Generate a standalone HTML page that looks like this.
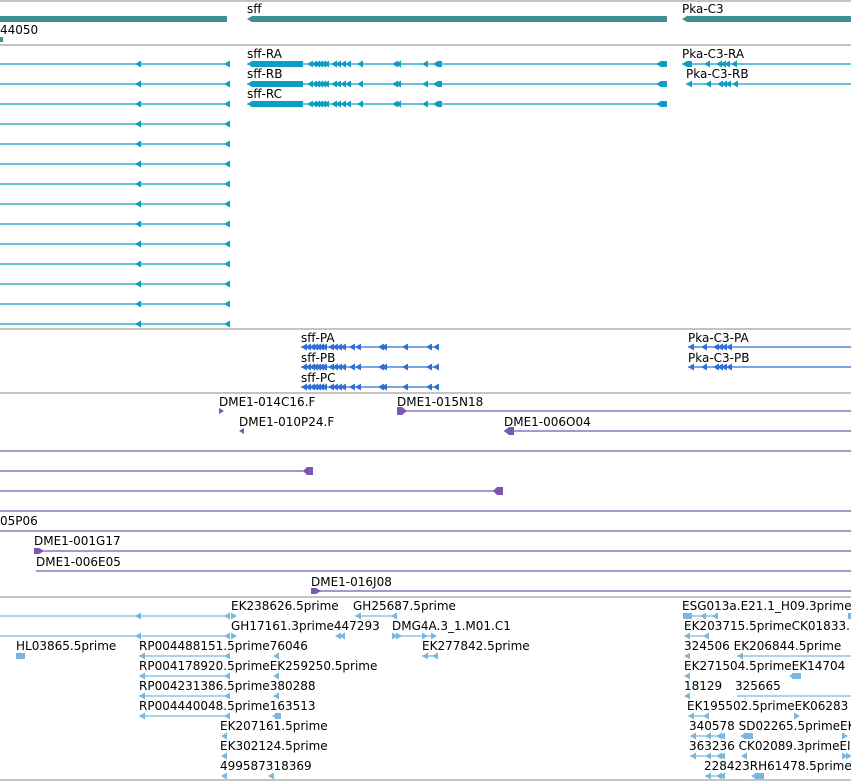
<!DOCTYPE html>
<html><head><meta charset="utf-8"><style>
html,body{margin:0;padding:0;background:#fff;}
svg{display:block;}
text{font-family:"DejaVu Sans","Liberation Sans",sans-serif;font-size:12px;fill:#000;}
.g{stroke:#c4c4c4;stroke-width:2;}
.t{stroke:#0d9ec4;stroke-width:1.3;fill:none;}
.tf{fill:#0d9ec4;}
.b{stroke:#2f6fd6;stroke-width:1.3;}
.bf{fill:#2f6fd6;}
.p{stroke:#7b57b3;stroke-width:1.3;}
.pf{fill:#7b57b3;}
.l{stroke:#7ab7e0;stroke-width:1.3;}
.lf{fill:#7ab7e0;}
</style></head><body>
<svg width="851" height="781" viewBox="0 0 851 781" xmlns="http://www.w3.org/2000/svg">
<defs>
<polygon id="al" points="0,0 6,-3.5 6,3.5"/>
<polygon id="ar" points="6,0 0,-3.5 0,3.5"/>
</defs>
<line class="g" x1="0" y1="1" x2="851" y2="1"/>
<line class="g" x1="0" y1="45" x2="851" y2="45"/>
<line class="g" x1="0" y1="329" x2="851" y2="329"/>
<line class="g" x1="0" y1="393" x2="851" y2="393"/>
<line class="g" x1="0" y1="597" x2="851" y2="597"/>
<line class="g" x1="0" y1="780" x2="851" y2="780"/>

<rect x="0" y="16" width="227" height="6" fill="#3f8f93"/>
<polygon points="247,19 252,16 667,16 667,22 252,22" fill="#3f8f93"/>
<polygon points="682,19 687,16 851,16 851,22 687,22" fill="#3f8f93"/>
<text x="247" y="13">sff</text>
<text x="682" y="13">Pka-C3</text>
<text x="0" y="34">44050</text>
<rect x="0" y="37" width="3" height="5" fill="#3f8f93"/>

<g class="tf">
<g id="lr">
<line class="t" x1="0" y1="64" x2="229" y2="64"/>
<use href="#al" x="135" y="64"/><polygon points="224,64 230,60.5 230,67.5"/>
</g>
<use href="#lr" y="20"/><use href="#lr" y="40"/><use href="#lr" y="60"/><use href="#lr" y="80"/>
<use href="#lr" y="100"/><use href="#lr" y="120"/><use href="#lr" y="140"/><use href="#lr" y="160"/>
<use href="#lr" y="180"/><use href="#lr" y="200"/><use href="#lr" y="220"/><use href="#lr" y="240"/><use href="#lr" y="260"/>
</g>
<g class="tf">
<g id="sr">
<line class="t" x1="247" y1="64" x2="667" y2="64"/>
<polygon points="247,64 252,61 303,61 303,67 252,67"/>
<use href="#al" x="307" y="64"/><use href="#al" x="311" y="64"/><use href="#al" x="314" y="64"/><use href="#al" x="317" y="64"/><use href="#al" x="320" y="64"/><use href="#al" x="323" y="64"/>
<use href="#al" x="331" y="64"/><use href="#al" x="335" y="64"/><use href="#al" x="340" y="64"/><use href="#al" x="345" y="64"/>
<use href="#al" x="357" y="64"/><use href="#al" x="392" y="64"/><use href="#al" x="395" y="64"/>
<use href="#al" x="422" y="64"/><use href="#al" x="433" y="64"/><polygon points="433,64 438,61 442,61 442,67 438,67"/>
<polygon points="656,64 661,61 667,61 667,67 661,67"/>
</g>
<use href="#sr" y="20"/><use href="#sr" y="40"/>
</g>
<text x="247" y="58">sff-RA</text>
<text x="247" y="78">sff-RB</text>
<text x="247" y="98">sff-RC</text>
<g class="tf">
<line class="t" x1="682" y1="64" x2="851" y2="64"/>
<polygon points="682,64 687,61 692,61 692,67 687,67"/>
<use href="#al" x="704" y="64"/><use href="#al" x="716" y="64"/><use href="#al" x="720" y="64"/><use href="#al" x="724" y="64"/><use href="#al" x="731" y="64"/>
<line class="t" x1="686" y1="84" x2="851" y2="84"/>
<use href="#al" x="686" y="84"/><use href="#al" x="705" y="84"/><use href="#al" x="717" y="84"/><use href="#al" x="721" y="84"/><use href="#al" x="725" y="84"/><use href="#al" x="732" y="84"/>
</g>
<text x="682" y="58">Pka-C3-RA</text>
<text x="686" y="78">Pka-C3-RB</text>

<g class="bf">
<g id="pr">
<line class="b" x1="301" y1="347" x2="437" y2="347"/>
<use href="#al" x="301" y="347"/><use href="#al" x="305" y="347"/><use href="#al" x="309" y="347"/><use href="#al" x="312" y="347"/><use href="#al" x="315" y="347"/><use href="#al" x="318" y="347"/><use href="#al" x="321" y="347"/>
<use href="#al" x="328" y="347"/><use href="#al" x="332" y="347"/><use href="#al" x="336" y="347"/><use href="#al" x="340" y="347"/>
<use href="#al" x="349" y="347"/><use href="#al" x="355" y="347"/><use href="#al" x="378" y="347"/><use href="#al" x="381" y="347"/><use href="#al" x="402" y="347"/><use href="#al" x="426" y="347"/><use href="#al" x="433" y="347"/>
</g>
<use href="#pr" y="20"/><use href="#pr" y="40"/>
<line class="b" x1="688" y1="347" x2="851" y2="347"/>
<use href="#al" x="688" y="347"/><use href="#al" x="701" y="347"/><use href="#al" x="713" y="347"/><use href="#al" x="717" y="347"/><use href="#al" x="721" y="347"/><use href="#al" x="726" y="347"/>
<line class="b" x1="688" y1="367" x2="851" y2="367"/>
<use href="#al" x="688" y="367"/><use href="#al" x="701" y="367"/><use href="#al" x="713" y="367"/><use href="#al" x="717" y="367"/><use href="#al" x="721" y="367"/><use href="#al" x="726" y="367"/>
</g>
<text x="301" y="342">sff-PA</text>
<text x="301" y="362">sff-PB</text>
<text x="301" y="382">sff-PC</text>
<text x="688" y="342">Pka-C3-PA</text>
<text x="688" y="362">Pka-C3-PB</text>

<g class="pf">
<polygon points="219,408 224,411 219,414"/>
<line class="p" x1="397" y1="411" x2="851" y2="411"/><polygon points="397,407 402,407 407,411 402,415 397,415"/>
<polygon points="239,431 244,428 244,434"/>
<line class="p" x1="504" y1="431" x2="851" y2="431"/><polygon points="504,431 509,427 514,427 514,435 509,435"/>
<line class="p" x1="0" y1="451" x2="851" y2="451"/>
<line class="p" x1="0" y1="471" x2="313" y2="471"/><polygon points="303,471 307,467 313,467 313,475 307,475"/>
<line class="p" x1="0" y1="491" x2="503" y2="491"/><polygon points="493,491 497,487 503,487 503,495 497,495"/>
<line class="p" x1="0" y1="511" x2="851" y2="511"/>
<line class="p" x1="0" y1="531" x2="851" y2="531"/>
<line class="p" x1="34" y1="551" x2="851" y2="551"/><polygon points="34,548 39,548 44,551 39,554 34,554"/>
<line class="p" x1="36" y1="571" x2="851" y2="571"/>
<line class="p" x1="311" y1="591" x2="851" y2="591"/><polygon points="311,588 316,588 321,591 316,594 311,594"/>
</g>
<text x="219" y="406">DME1-014C16.F</text>
<text x="397" y="406">DME1-015N18</text>
<text x="239" y="426">DME1-010P24.F</text>
<text x="504" y="426">DME1-006O04</text>
<text x="0" y="525">05P06</text>
<text x="34" y="545">DME1-001G17</text>
<text x="36" y="566">DME1-006E05</text>
<text x="311" y="586">DME1-016J08</text>

<g class="lf">
<line class="l" x1="0" y1="616" x2="229" y2="616"/><use href="#al" x="135" y="616"/><use href="#al" x="224" y="616"/><use href="#ar" x="231" y="616"/>
<line class="l" x1="0" y1="636" x2="229" y2="636"/><use href="#al" x="135" y="636"/><use href="#al" x="224" y="636"/><use href="#ar" x="231" y="636"/>
<rect x="16" y="653" width="9" height="6"/><use href="#al" x="15" y="656"/>
<g id="rp"><line class="l" x1="139" y1="656" x2="229" y2="656"/><use href="#al" x="139" y="656"/><use href="#al" x="224" y="656"/></g>
<use href="#rp" y="20"/><use href="#rp" y="40"/><use href="#rp" y="60"/>
<use href="#al" x="273" y="656"/><use href="#al" x="273" y="676"/><use href="#al" x="273" y="696"/>
<rect x="275" y="713" width="6" height="6"/><use href="#al" x="272" y="716"/>
<use href="#al" x="221" y="736"/><use href="#al" x="221" y="756"/><use href="#al" x="221" y="776"/><use href="#al" x="268" y="776"/>
<line class="l" x1="355" y1="616" x2="396" y2="616"/><use href="#al" x="355" y="616"/><use href="#al" x="391" y="616"/>
<use href="#al" x="335" y="636"/><use href="#al" x="339" y="636"/>
<line class="l" x1="392" y1="636" x2="436" y2="636"/><use href="#ar" x="392" y="636"/><use href="#ar" x="396" y="636"/><use href="#ar" x="422" y="636"/><use href="#ar" x="431" y="636"/>
<line class="l" x1="422" y1="656" x2="437" y2="656"/><use href="#al" x="422" y="656"/><use href="#al" x="432" y="656"/>
<line class="l" x1="683" y1="616" x2="718" y2="616"/><rect x="683" y="613" width="9" height="6"/><use href="#al" x="700" y="616"/><use href="#al" x="712" y="616"/>
<rect x="848" y="613" width="3" height="6"/>
<line class="l" x1="684" y1="636" x2="708" y2="636"/><use href="#al" x="684" y="636"/><use href="#al" x="703" y="636"/>
<use href="#al" x="684" y="656"/><line class="l" x1="737" y1="656" x2="851" y2="656"/><use href="#al" x="737" y="656"/>
<use href="#al" x="684" y="676"/><rect x="792" y="673" width="9" height="6"/><use href="#al" x="789" y="676"/>
<use href="#al" x="684" y="696"/><line class="l" x1="737" y1="696" x2="851" y2="696"/>
<line class="l" x1="688" y1="716" x2="707" y2="716"/><use href="#al" x="688" y="716"/><use href="#al" x="703" y="716"/><use href="#ar" x="794" y="716"/>
<line class="l" x1="690" y1="736" x2="722" y2="736"/><use href="#al" x="690" y="736"/><use href="#al" x="705" y="736"/><use href="#al" x="716" y="736"/><use href="#al" x="719" y="736"/><rect x="744" y="733" width="9" height="6"/><use href="#al" x="740" y="736"/><use href="#ar" x="842" y="736"/>
<line class="l" x1="690" y1="756" x2="722" y2="756"/><use href="#al" x="690" y="756"/><use href="#al" x="705" y="756"/><use href="#al" x="716" y="756"/><use href="#al" x="719" y="756"/><use href="#al" x="741" y="756"/><use href="#ar" x="842" y="756"/><use href="#ar" x="846" y="756"/>
<line class="l" x1="705" y1="776" x2="722" y2="776"/><use href="#al" x="705" y="776"/><use href="#al" x="716" y="776"/><use href="#al" x="719" y="776"/><rect x="755" y="773" width="9" height="6"/><use href="#al" x="751" y="776"/>
</g>
<text x="231" y="610">EK238626.5prime</text>
<text x="353" y="610">GH25687.5prime</text>
<text x="231" y="630">GH17161.3prime447293</text>
<text x="392" y="630">DMG4A.3_1.M01.C1</text>
<text x="16" y="650">HL03865.5prime</text>
<text x="139" y="650">RP004488151.5prime76046</text>
<text x="422" y="650">EK277842.5prime</text>
<text x="139" y="670">RP004178920.5primeEK259250.5prime</text>
<text x="139" y="690">RP004231386.5prime380288</text>
<text x="139" y="710">RP004440048.5prime163513</text>
<text x="220" y="730">EK207161.5prime</text>
<text x="220" y="750">EK302124.5prime</text>
<text x="220" y="770">499587318369</text>
<text x="682" y="610">ESG013a.E21.1_H09.3prime</text>
<text x="684" y="630">EK203715.5primeCK01833.</text>
<text x="684" y="650">324506 EK206844.5prime</text>
<text x="684" y="670">EK271504.5primeEK14704</text>
<text x="684" y="690">18129</text>
<text x="735" y="690">325665</text>
<text x="687" y="710">EK195502.5primeEK06283</text>
<text x="689" y="730">340578 SD02265.5primeEK</text>
<text x="689" y="750">363236 CK02089.3primeEI</text>
<text x="704" y="770">228423RH61478.5prime</text>
</svg>
</body></html>
